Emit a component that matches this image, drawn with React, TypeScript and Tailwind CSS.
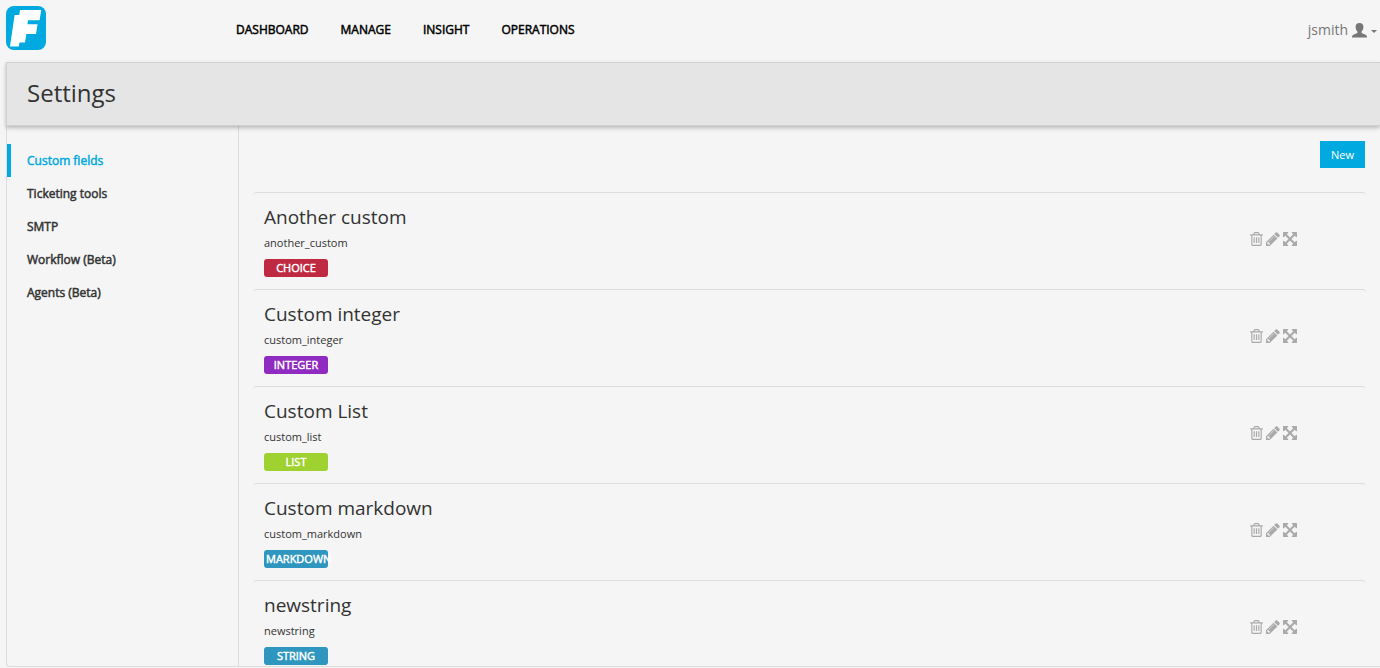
const navItems = ["DASHBOARD", "MANAGE", "INSIGHT", "OPERATIONS"];

const settings = ["Custom fields", "Ticketing tools", "SMTP", "Workflow (Beta)", "Agents (Beta)"];

const fields = [
  { title: "Another custom", name: "another_custom", type: "CHOICE", color: "bg-[#c02942]" },
  { title: "Custom integer", name: "custom_integer", type: "INTEGER", color: "bg-[#8f2bc0]" },
  { title: "Custom List", name: "custom_list", type: "LIST", color: "bg-[#9fd130]" },
  { title: "Custom markdown", name: "custom_markdown", type: "MARKDOWN", color: "bg-[#2f96c0]" },
  { title: "newstring", name: "newstring", type: "STRING", color: "bg-[#2f96c0]" },
];

function Logo() {
  return (
    <svg viewBox="0 0 40 44" className="h-11 w-10" aria-hidden="true">
      <rect width="40" height="44" rx="8" fill="#00a9e0" />
      <path
        fill="#fff"
        d="M14 4H35.2L33.6 14.2H22L21.4 18.2H31.6L30 28H20.4L19 36.4H13.6L12.8 40.6H4L8.6 9H13.2Z"
      />
    </svg>
  );
}

function TrashIcon() {
  return (
    <svg viewBox="192 128 1408 1536" className="h-3.5 w-[13px]" fill="currentColor" aria-hidden="true">
      <path d="M704 736v576q0 14-9 23t-23 9h-64q-14 0-23-9t-9-23v-576q0-14 9-23t23-9h64q14 0 23 9t9 23zm256 0v576q0 14-9 23t-23 9h-64q-14 0-23-9t-9-23v-576q0-14 9-23t23-9h64q14 0 23 9t9 23zm256 0v576q0 14-9 23t-23 9h-64q-14 0-23-9t-9-23v-576q0-14 9-23t23-9h64q14 0 23 9t9 23zm128 724v-948h-896v948q0 22 7 40.5t14.5 27 10.5 8.5h832q3 0 10.5-8.5t14.5-27 7-40.5zm-672-1076h448l-48-117q-7-9-17-11h-317q-10 2-17 11zm928 32v64q0 14-9 23t-23 9h-96v948q0 83-47 143.5t-113 60.5h-832q-66 0-113-58.5t-47-141.5v-952h-96q-14 0-23-9t-9-23v-64q0-14 9-23t23-9h309l70-167q15-37 54-63t79-26h320q40 0 79 26t54 63l70 167h309q14 0 23 9t9 23z" />
    </svg>
  );
}

function PencilIcon() {
  return (
    <svg viewBox="128 128 1536 1536" className="h-3.5 w-3.5" fill="currentColor" aria-hidden="true">
      <path d="M491 1536l91-91-235-235-91 91v107h128v128h107zm523-928q0-22-22-22-10 0-17 7l-542 542q-7 7-7 17 0 22 22 22 10 0 17-7l542-542q7-7 7-17zm-54-192l416 416-832 832h-416v-416zm683 96q0 53-37 90l-166 166-416-416 166-165q36-38 90-38 53 0 91 38l235 234q37 39 37 91z" />
    </svg>
  );
}

function MoveIcon() {
  return (
    <svg viewBox="128 128 1536 1536" className="h-3.5 w-3.5" fill="currentColor" aria-hidden="true">
      <path d="M1411 541l-355 355 355 355 144-144q29-31 70-14 39 17 39 59v448q0 26-19 45t-45 19h-448q-42 0-59-40-17-39 14-69l144-144-355-355-355 355 144 144q31 30 14 69-17 40-59 40h-448q-26 0-45-19t-19-45v-448q0-42 40-59 39-17 69 14l144 144 355-355-355-355-144 144q-19 19-45 19-12 0-24-5-40-17-40-59v-448q0-26 19-45t45-19h448q42 0 59 40 17 39-14 69l-144 144 355 355 355-355-144-144q-31-30-14-69 17-40 59-40h448q26 0 45 19t19 45v448q0 42-39 59-13 5-25 5-26 0-45-19z" />
    </svg>
  );
}

function UserIcon() {
  return (
    <svg viewBox="0 0 15 15" className="h-[15px] w-[15px]" fill="currentColor" aria-hidden="true">
      <path d="M7.5 0C10 0 11.4 1.4 11.4 3.8C11.4 5.8 10.8 7.4 9.6 8.6V10L13.6 11.8C14.6 12.3 15 12.8 15 14.6H0C0 12.8 .4 12.3 1.4 11.8L5.4 10V8.6C4.2 7.4 3.6 5.8 3.6 3.8C3.6 1.4 5 0 7.5 0Z" />
    </svg>
  );
}

export default function App() {
  return (
    <div className="flex h-screen flex-col overflow-hidden bg-[#f5f5f5] pb-px pl-1.5 font-['Open_Sans',sans-serif] text-[#333]">
      <header className="flex h-[62px] shrink-0 items-center pb-0.5">
        <a href="#" aria-label="Home" className="-mt-1">
          <Logo />
        </a>
        <nav className="ml-[190px] flex gap-8 text-xs leading-5 text-black [-webkit-text-stroke:0.04em]">
          {navItems.map((item) => (
            <a key={item} href="#">
              {item}
            </a>
          ))}
        </nav>
        <button className="ml-auto flex items-center gap-1 pr-[3px] text-sm leading-5 text-[#777]">
          jsmith
          <UserIcon />
          <svg viewBox="0 0 6 3" className="mt-0.5 h-[3px] w-1.5" fill="currentColor" aria-hidden="true">
            <path d="M0 0H6L3 3Z" />
          </svg>
        </button>
      </header>

      <div className="z-10 flex h-16 shrink-0 items-center border border-r-0 border-[#d0d0d0] bg-[#e5e5e5] px-5 pb-0.5 shadow-[0_2px_4px_rgba(0,0,0,0.25)]">
        <h1 className="text-2xl">Settings</h1>
      </div>

      <div className="flex min-h-0 flex-1 overflow-hidden rounded-bl border-b border-l border-[#dcdcdc]">
        <aside className="w-[232px] shrink-0 border-r border-[#dcdcdc] pt-[18px]">
          <ul className="text-xs [-webkit-text-stroke:0.04em]">
            {settings.map((item, i) => (
              <li key={item}>
                <a
                  href="#"
                  className={
                    i === 0
                      ? "flex h-[33px] items-center border-l-4 border-[#00a9e0] pl-4 text-[#00a9e0]"
                      : "flex h-[33px] items-center border-l-4 border-transparent pl-4"
                  }
                >
                  {item}
                </a>
              </li>
            ))}
          </ul>
        </aside>

        <main className="min-w-0 flex-1 px-3.5 pt-[15px]">
          <div className="flex justify-end pr-px">
            <button className="h-[27px] bg-[#00a9e0] px-[11px] pt-0.5 text-[11px] text-white">New</button>
          </div>
          <ul className="mt-6">
            {fields.map((field) => (
              <li
                key={field.name}
                className="flex h-[97px] items-center rounded-sm border-t border-[#dcdcdc] pr-[69px] pb-[3px] pl-[11px]"
              >
                <div className="flex-1">
                  <h2 className="text-[19px] leading-7">{field.title}</h2>
                  <p className="text-[11px] leading-6">{field.name}</p>
                  <span
                    className={`mt-1 block h-[18px] w-16 rounded-[3px] px-0.5 text-center text-[11px] leading-[18px] text-white [-webkit-text-stroke:0.04em] ${field.color}`}
                  >
                    {field.type}
                  </span>
                </div>
                <div className="flex items-center gap-[3px] pb-0.5 text-[#aaa]">
                  <button aria-label="Delete">
                    <TrashIcon />
                  </button>
                  <button aria-label="Edit">
                    <PencilIcon />
                  </button>
                  <button aria-label="Move">
                    <MoveIcon />
                  </button>
                </div>
              </li>
            ))}
          </ul>
        </main>
      </div>
    </div>
  );
}
